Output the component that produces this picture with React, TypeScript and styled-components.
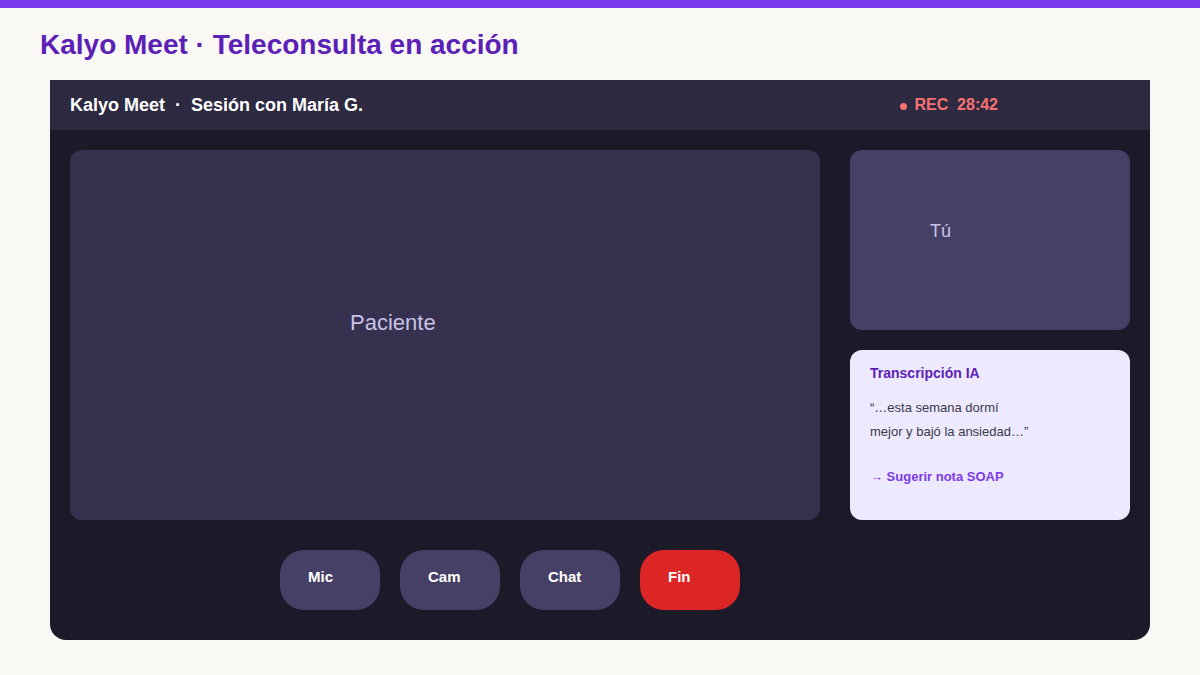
import React from "react";
import styled, { createGlobalStyle } from "styled-components";

const GlobalStyle = createGlobalStyle`
  html, body {
    margin: 0;
    padding: 0;
    background: #f9f8f5;
    font-family: "Liberation Sans", Arial, sans-serif;
  }
`;

const TopStripe = styled.div`
  height: 8px;
  background: #7c3aed;
`;

const PageTitle = styled.h1`
  margin: 23px 40px 21px;
  font-size: 28px;
  line-height: 28px;
  font-weight: 700;
  color: #5b21b6;
`;

const Window = styled.div`
  margin: 0 50px;
  background: #1c1a28;
  border-radius: 0 0 16px 16px;
  overflow: hidden;
`;

const Header = styled.div`
  height: 50px;
  display: flex;
  align-items: center;
  padding: 0 152px 0 20px;
  background: #2c2940;
`;

const SessionName = styled.div`
  font-size: 18px;
  font-weight: 700;
  color: #ffffff;
  white-space: pre;
`;

const RecBadge = styled.div`
  margin-left: auto;
  display: flex;
  align-items: center;
  font-size: 16px;
  font-weight: 700;
  color: #f87171;
  white-space: pre;
`;

const RecDot = styled.span`
  width: 7px;
  height: 7px;
  margin: 2px 7px 0 1px;
  border-radius: 50%;
  background: #f87171;
`;

const Body = styled.div`
  padding: 20px 20px 30px;
`;

const Stage = styled.div`
  display: grid;
  grid-template-columns: 750px 280px;
  column-gap: 30px;
  height: 370px;
`;

const VideoTile = styled.div<{ $bg: string; $padX: number; $padY: number }>`
  box-sizing: border-box;
  height: 100%;
  padding: ${(p) => p.$padY}px 0 0 ${(p) => p.$padX}px;
  border-radius: 12px;
  background: ${(p) => p.$bg};
`;

const TileLabel = styled.div<{ $size: number }>`
  font-size: ${(p) => p.$size}px;
  line-height: ${(p) => p.$size}px;
  color: #c9c2e8;
`;

const SideColumn = styled.div`
  display: grid;
  grid-template-rows: 180px 170px;
  row-gap: 20px;
`;

const TranscriptCard = styled.div`
  padding: 16px 20px 0;
  border-radius: 12px;
  background: #ede9fe;
`;

const CardTitle = styled.div`
  font-size: 14px;
  line-height: 14px;
  font-weight: 700;
  color: #5b21b6;
`;

const Quote = styled.div`
  margin-top: 16px;
  font-size: 13px;
  line-height: 24px;
  color: #3b3a4a;
`;

const SuggestLink = styled.div`
  margin-top: 21px;
  font-size: 13px;
  line-height: 24px;
  font-weight: 700;
  color: #7c3aed;
`;

const Controls = styled.div`
  display: flex;
  gap: 20px;
  margin-top: 30px;
  padding-left: 210px;
`;

const ControlButton = styled.button<{ $danger?: boolean }>`
  box-sizing: border-box;
  display: flex;
  align-items: flex-start;
  width: 100px;
  height: 60px;
  padding: 19px 0 0 28px;
  border: none;
  border-radius: 24px;
  background: ${(p) => (p.$danger ? "#dc2626" : "#463f66")};
  color: #ffffff;
  font-family: "Liberation Sans", Arial, sans-serif;
  font-size: 15px;
  line-height: 15px;
  font-weight: 700;
  cursor: pointer;
`;

const controls = [
  { label: "Mic" },
  { label: "Cam" },
  { label: "Chat" },
  { label: "Fin", danger: true },
];

export default function App() {
  return (
    <>
      <GlobalStyle />
      <TopStripe />
      <PageTitle>Kalyo Meet · Teleconsulta en acción</PageTitle>
      <Window>
        <Header>
          <SessionName>{"Kalyo Meet  ·  Sesión con María G."}</SessionName>
          <RecBadge>
            <RecDot />
            {"REC  28:42"}
          </RecBadge>
        </Header>
        <Body>
          <Stage>
            <VideoTile $bg="#36314f" $padX={280} $padY={162}>
              <TileLabel $size={22}>Paciente</TileLabel>
            </VideoTile>
            <SideColumn>
              <VideoTile $bg="#463f66" $padX={80} $padY={72}>
                <TileLabel $size={18}>Tú</TileLabel>
              </VideoTile>
              <TranscriptCard>
                <CardTitle>Transcripción IA</CardTitle>
                <Quote>
                  “…esta semana dormí
                  <br />
                  mejor y bajó la ansiedad…”
                </Quote>
                <SuggestLink>→ Sugerir nota SOAP</SuggestLink>
              </TranscriptCard>
            </SideColumn>
          </Stage>
          <Controls>
            {controls.map((c) => (
              <ControlButton key={c.label} $danger={c.danger}>
                {c.label}
              </ControlButton>
            ))}
          </Controls>
        </Body>
      </Window>
    </>
  );
}
